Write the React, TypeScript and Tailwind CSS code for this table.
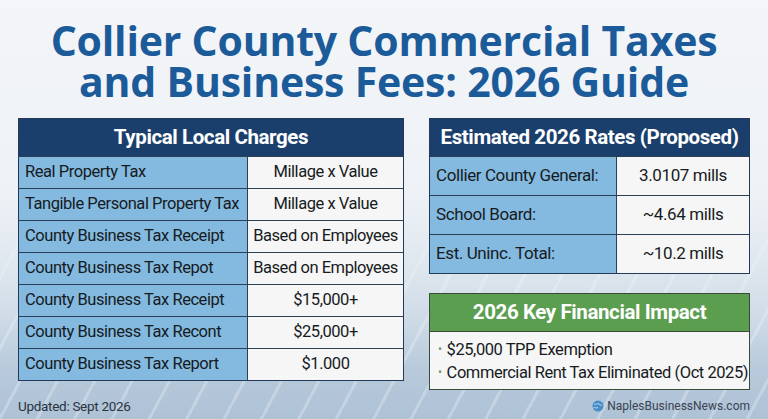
import React from 'react';

const localCharges: [string, string][] = [
  ['Real Property Tax', 'Millage x Value'],
  ['Tangible Personal Property Tax', 'Millage x Value'],
  ['County Business Tax Receipt', 'Based on Employees'],
  ['County Business Tax Repot', 'Based on Employees'],
  ['County Business Tax Receipt', '$15,000+'],
  ['County Business Tax Recont', '$25,000+'],
  ['County Business Tax Report', '$1.000'],
];

const rates: [string, string][] = [
  ['Collier County General:', '3.0107 mills'],
  ['School Board:', '~4.64 mills'],
  ['Est. Uninc. Total:', '~10.2 mills'],
];

const base = { fontFamily: 'Roboto, "Liberation Sans", sans-serif' };

const App: React.FC = () => {
  return (
    <div
      className="w-[768px] h-[419px] overflow-hidden flex flex-col bg-[linear-gradient(180deg,#f3f5f8_0%,#eef2f6_45%,rgba(232,238,244,0)_88%),repeating-linear-gradient(118deg,transparent_0_30px,rgba(255,255,255,0.25)_30px_33px),linear-gradient(180deg,#e4ebf2_0%,#c6d5e3_70%,#aec2d6_100%)]"
      style={base}
    >
      {/* Title */}
      <h1
        className="pt-[20px] text-center text-[#1c5b9a] font-bold text-[41px] leading-[41px] tracking-[-0.2px]"
        style={{ fontFamily: '"Open Sans", "Liberation Sans", sans-serif' }}
      >
        Collier County Commercial Taxes
        <br />
        and Business Fees: 2026 Guide
      </h1>

      <div className="flex px-[18px] mt-[16px] gap-[25px]">
        {/* Left table */}
        <div className="flex flex-col w-[386px]">
          <div className="border border-[#223a5a] w-full">
            <div className="h-[37px] bg-[#1b3f6d] flex items-center justify-center text-white font-bold text-[20.5px] tracking-[-0.4px]">
              Typical Local Charges
            </div>
            {localCharges.map(([label, value], i) => (
              <div key={i} className="flex h-[32px] border-t border-[#2c3f55] text-[#161b22] text-[16.5px] tracking-[-0.45px]">
                <div className="w-[229px] bg-[#84b9e0] border-r border-[#2c3f55] flex items-center pl-[6px]">
                  {label}
                </div>
                <div className="flex-1 bg-[#f6f6f6] flex items-center justify-center">{value}</div>
              </div>
            ))}
          </div>
          <div className="mt-[15px] text-[13.5px] text-[#2a3442] tracking-[-0.3px]">Updated: Sept 2026</div>
        </div>

        {/* Right column */}
        <div className="flex flex-col w-[321px]">
          <div className="border border-[#223a5a]">
            <div className="h-[37px] bg-[#1b3f6d] flex items-center justify-center text-white font-bold text-[20.5px] tracking-[-0.4px]">
              Estimated 2026 Rates (Proposed)
            </div>
            {rates.map(([label, value], i) => (
              <div key={i} className="flex h-[39px] border-t border-[#2c3f55] text-[#161b22] text-[17px] tracking-[-0.4px]">
                <div className="w-[187px] bg-[#84b9e0] border-r border-[#2c3f55] flex items-center pl-[6px]">
                  {label}
                </div>
                <div className="flex-1 bg-[#f6f6f6] flex items-center justify-center">{value}</div>
              </div>
            ))}
          </div>

          <div className="mt-[19px] border border-[#3a4a3a]">
            <div className="h-[37px] bg-[#5b9e50] flex items-center justify-center text-white font-bold text-[20.5px] tracking-[-0.4px]">
              2026 Key Financial Impact
            </div>
            <div className="bg-[#f6f6f6] border-t border-[#3a4a3a] h-[58px] flex flex-col justify-center pl-[8px] text-[#161b22] text-[16.5px] tracking-[-0.45px] leading-[23px]">
              <div className="flex items-center gap-[5px]">
                <span className="text-[#6f9a68] text-[12px]">•</span>
                <span>$25,000 TPP Exemption</span>
              </div>
              <div className="flex items-center gap-[5px]">
                <span className="text-[#6f9a68] text-[12px]">•</span>
                <span>Commercial Rent Tax Eliminated (Oct 2025)</span>
              </div>
            </div>
          </div>

          <div className="mt-[7px] flex items-center justify-end gap-[3px] text-[12px] text-[#3a4350]">
            <svg width="12" height="12" viewBox="0 0 12 12">
              <circle cx="6" cy="6" r="5.5" fill="#4a8cc8" />
              <path d="M2 4c2 1 3-1 5 0s2 2 3 1M1.5 7.5c2 0 3 1 4.5 0" stroke="#b5d8f0" strokeWidth="1" fill="none" />
            </svg>
            <span>NaplesBusinessNews.com</span>
          </div>
        </div>
      </div>
    </div>
  );
};

export default App;
